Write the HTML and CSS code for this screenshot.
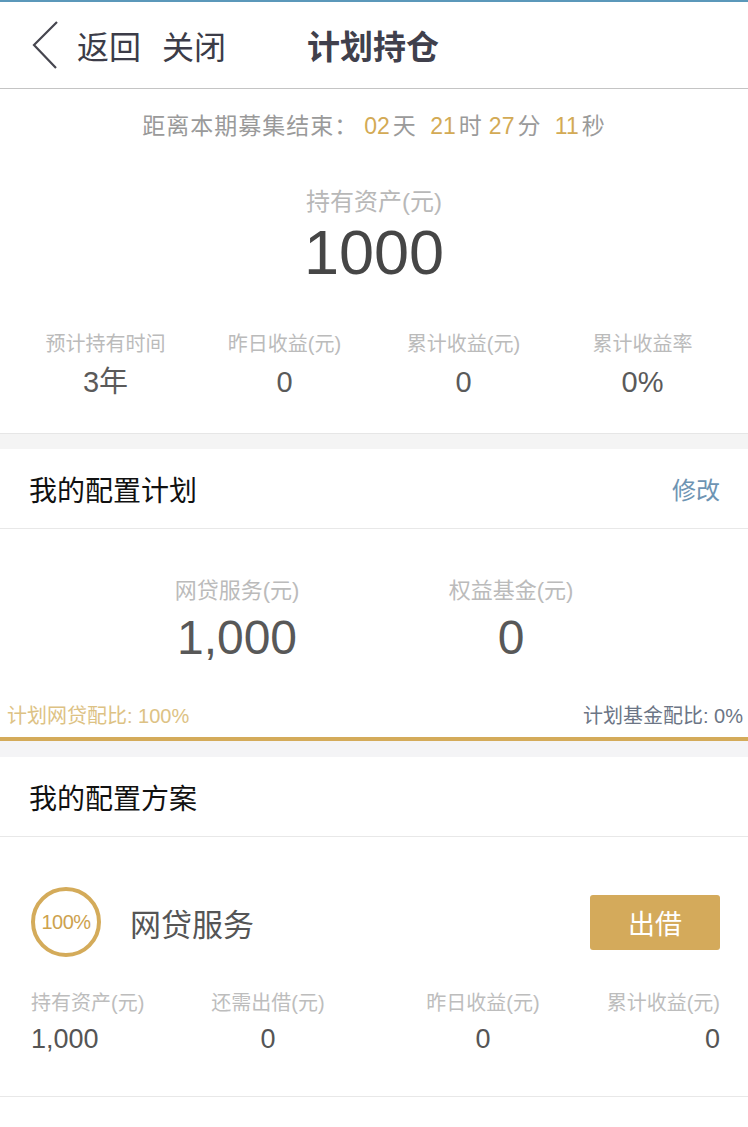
FILE: index.html
```html
<!DOCTYPE html>
<html lang="zh-CN">
<head>
    <meta charset="UTF-8">
    <meta name="viewport" content="width=device-width, initial-scale=1.0">
    <title>计划持仓</title>
    <link rel="stylesheet" href="styles.css">
</head>
<body>

    <div class="nav-bar">
        <div class="nav-left">
            <svg class="back-icon" width="30" height="52" viewBox="0 0 30 52">
                <polyline points="26,3 3,26 25,49" fill="none" stroke="#46464f" stroke-width="2.2" stroke-linejoin="miter"/>
            </svg>
            <span class="nav-link">返回</span>
            <span class="nav-link">关闭</span>
        </div>
        <div class="nav-title">计划持仓</div>
    </div>

    <div class="summary">
        <div class="countdown">
            距离本期募集结束：<span class="num">02</span>天 <span class="num">21</span>时<span class="num">27</span>分 <span class="num">11</span>秒
        </div>
        <div class="asset-label">持有资产(元)</div>
        <div class="asset-value">1000</div>

        <div class="stats">
            <div class="stat">
                <div class="stat-label">预计持有时间</div>
                <div class="stat-value">3年</div>
            </div>
            <div class="stat">
                <div class="stat-label">昨日收益(元)</div>
                <div class="stat-value">0</div>
            </div>
            <div class="stat">
                <div class="stat-label">累计收益(元)</div>
                <div class="stat-value">0</div>
            </div>
            <div class="stat">
                <div class="stat-label">累计收益率</div>
                <div class="stat-value">0%</div>
            </div>
        </div>
    </div>

    <div class="gap"></div>

    <div class="section-head">
        <span>我的配置计划</span>
        <span class="edit-link">修改</span>
    </div>

    <div class="plan">
        <div class="plan-cols">
            <div class="plan-col">
                <div class="plan-label">网贷服务(元)</div>
                <div class="plan-value">1,000</div>
            </div>
            <div class="plan-col">
                <div class="plan-label">权益基金(元)</div>
                <div class="plan-value">0</div>
            </div>
        </div>
        <div class="ratio">
            <span class="ratio-loan">计划网贷配比: 100%</span>
            <span class="ratio-fund">计划基金配比: 0%</span>
        </div>
        <div class="ratio-bar">
            <div class="ratio-fill" style="width: 100%"></div>
        </div>
    </div>

    <div class="gap gap-plain"></div>

    <div class="section-head">
        <span>我的配置方案</span>
    </div>

    <div class="scheme-item">
        <div class="scheme-top">
            <div class="percent-ring">100%</div>
            <div class="scheme-name">网贷服务</div>
            <button class="lend-btn">出借</button>
        </div>
        <div class="sub-stats">
            <div class="sub-stat sub-first">
                <div class="sub-label">持有资产(元)</div>
                <div class="sub-value">1,000</div>
            </div>
            <div class="sub-stat sub-mid">
                <div class="sub-label">还需出借(元)</div>
                <div class="sub-value">0</div>
            </div>
            <div class="sub-stat sub-mid sub-third">
                <div class="sub-label">昨日收益(元)</div>
                <div class="sub-value">0</div>
            </div>
            <div class="sub-stat sub-last">
                <div class="sub-label">累计收益(元)</div>
                <div class="sub-value">0</div>
            </div>
        </div>
    </div>

</body>
</html>
```

FILE: styles.css
```css
body {
    font-family: "Liberation Sans", "Noto Sans CJK SC", sans-serif;
    background-color: #fff;
    margin: 0;
    border-top: 2px solid #5b98ba;
}

.nav-bar {
    height: 86px;
    display: flex;
    align-items: center;
    border-bottom: 1px solid #c4c4c4;
}

.nav-left {
    display: flex;
    align-items: center;
    padding-left: 31px;
    width: 276px;
}

.back-icon {
    margin-right: 16px;
}

.nav-link {
    font-size: 32px;
    color: #3c3c48;
    margin-right: 21px;
}

.nav-title {
    font-size: 33px;
    font-weight: bold;
    color: #40404c;
}

.summary {
    padding-top: 22px;
    padding-bottom: 33px;
    text-align: center;
}

.countdown {
    font-size: 23px;
    line-height: 30px;
    color: #9a9a9a;
    letter-spacing: 1px;
}

.countdown .num {
    color: #d3aa55;
    margin: 0 3px 0 6px;
    letter-spacing: 0;
}

.asset-label {
    margin-top: 46px;
    font-size: 24px;
    line-height: 30px;
    color: #b8b8b8;
}

.asset-value {
    margin-top: 3px;
    font-size: 63px;
    line-height: 64px;
    color: #464646;
}

.stats {
    display: grid;
    grid-template-columns: repeat(4, 1fr);
    padding: 0 16px;
    margin-top: 47px;
}

.stat-label {
    font-size: 20px;
    line-height: 26px;
    color: #bbb;
}

.stat-value {
    margin-top: 7px;
    font-size: 29px;
    line-height: 36px;
    color: #5a5a5a;
}

.gap {
    height: 15px;
    background-color: #f4f4f4;
    border-top: 1px solid #e6e6e6;
}

.gap-plain {
    height: 16px;
    border-top: none;
    background-color: #f4f4f6;
}

.section-head {
    height: 79px;
    padding: 0 28px 0 29px;
    display: flex;
    align-items: center;
    justify-content: space-between;
    font-size: 28px;
    color: #111;
    border-bottom: 1px solid #e8e8e8;
}

.edit-link {
    font-size: 24px;
    color: #6e94b3;
}

.plan {
    padding-top: 48px;
}

.plan-cols {
    display: grid;
    grid-template-columns: 274px 274px;
    justify-content: center;
    text-align: center;
}

.plan-label {
    font-size: 22px;
    line-height: 28px;
    color: #bbb;
}

.plan-value {
    margin-top: 8px;
    font-size: 48px;
    line-height: 50px;
    color: #585858;
}

.ratio {
    display: flex;
    justify-content: space-between;
    padding: 0 5px 0 7px;
    margin-top: 41px;
    font-size: 20px;
    line-height: 24px;
}

.ratio-loan {
    color: #ddc284;
}

.ratio-fund {
    color: #6c7585;
}

.ratio-bar {
    margin-top: 9px;
    height: 4px;
    background-color: #6c7585;
}

.ratio-fill {
    height: 100%;
    background-color: #d4ab5a;
}

.scheme-item {
    padding: 50px 28px 40px 31px;
    border-bottom: 1px solid #e8e8e8;
}

.scheme-top {
    display: flex;
    align-items: center;
}

.percent-ring {
    width: 62px;
    height: 62px;
    border: 4px solid #d4ab5a;
    border-radius: 50%;
    display: flex;
    align-items: center;
    justify-content: center;
    font-size: 20px;
    letter-spacing: -0.5px;
    color: #cda24e;
}

.scheme-name {
    margin-left: 29px;
    font-size: 31px;
    color: #555;
    flex: 1;
}

.lend-btn {
    width: 130px;
    height: 55px;
    background-color: #d4aa5b;
    color: #fff;
    border: none;
    border-radius: 3px;
    font-family: inherit;
    font-size: 27px;
    cursor: pointer;
}

.sub-stats {
    display: flex;
    margin-top: 33px;
}

.sub-label {
    font-size: 20px;
    line-height: 26px;
    color: #bdbdbd;
    white-space: nowrap;
}

.sub-value {
    margin-top: 6px;
    font-size: 27px;
    line-height: 34px;
    color: #555;
}

.sub-first {
    flex: 1;
}

.sub-mid {
    width: 114px;
    text-align: center;
}

.sub-third {
    margin-left: 101px;
}

.sub-last {
    flex: 1;
    text-align: right;
}
```
